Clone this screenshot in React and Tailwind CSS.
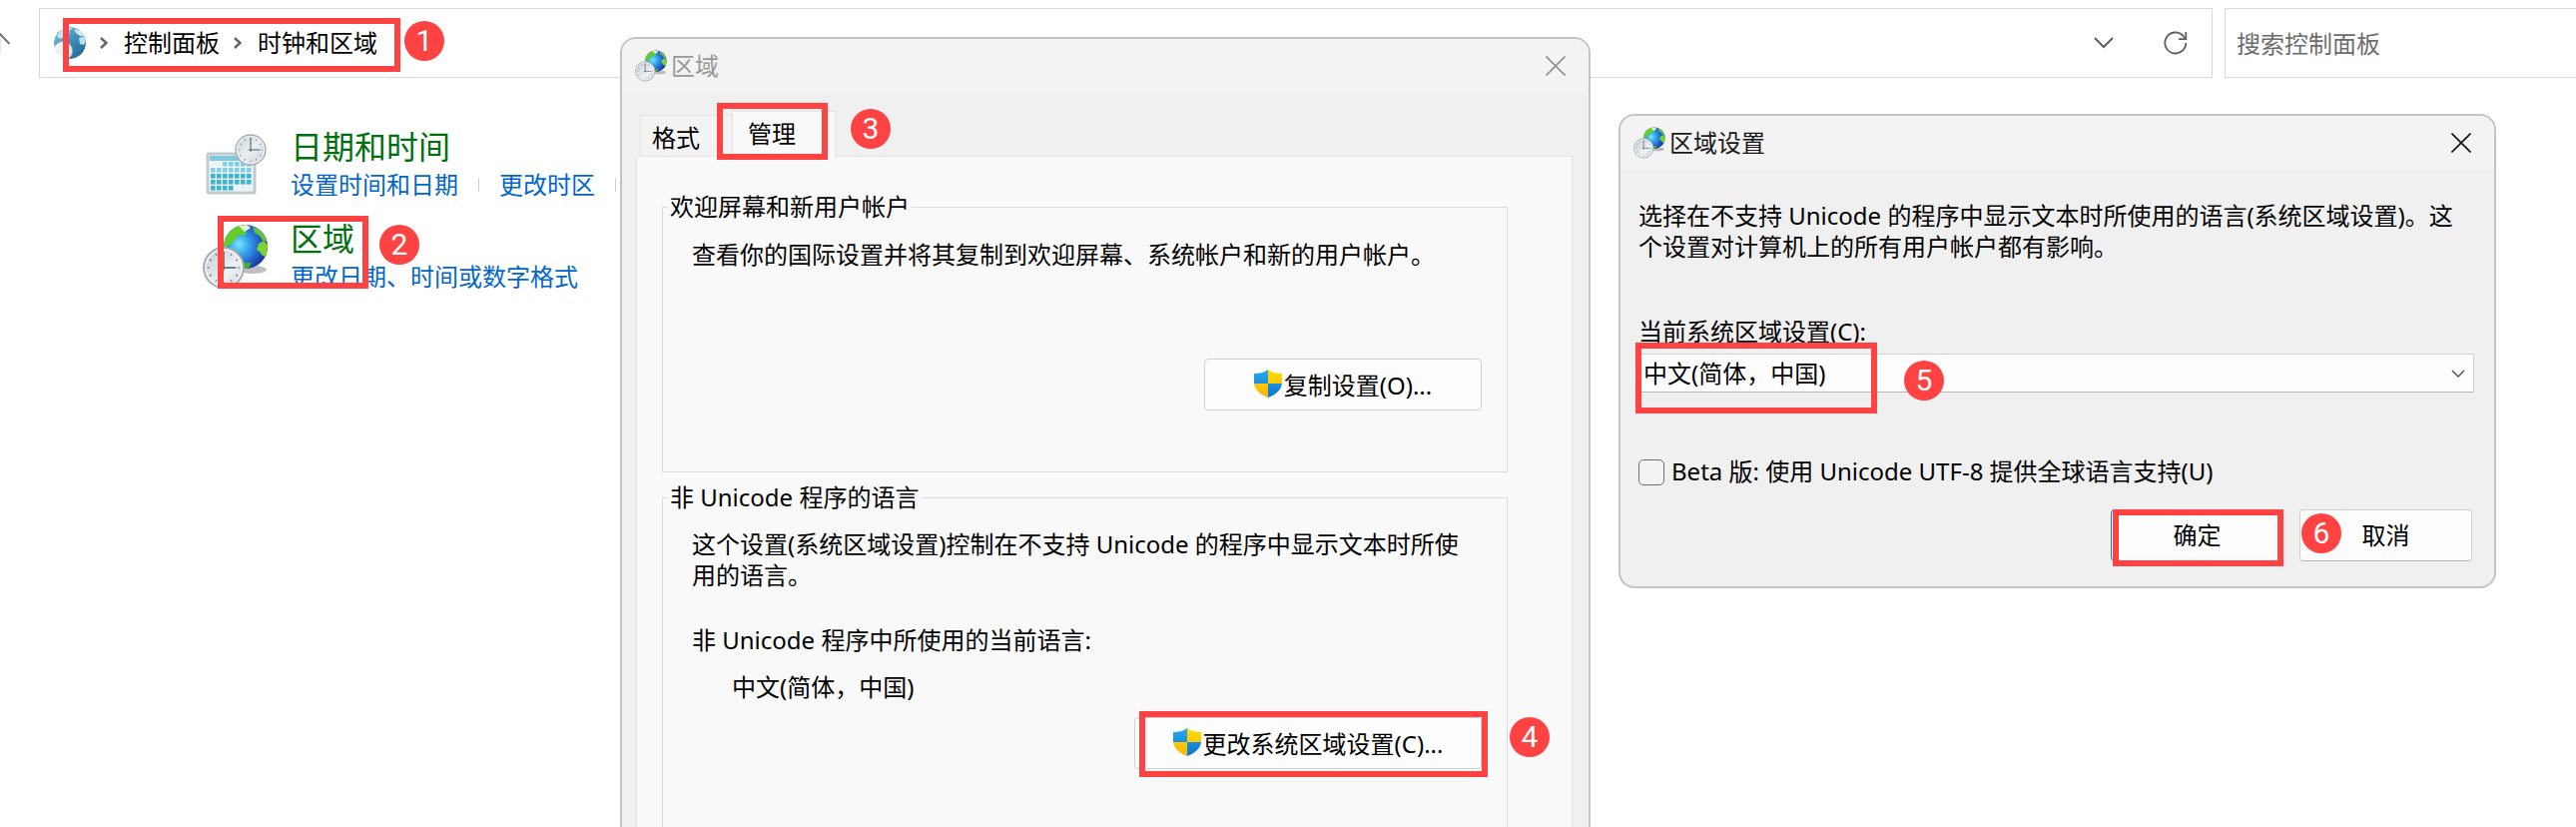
import React, { useId } from "react";

function ClockFace({ cx, cy, r, fill }) {
  const ticks = [0, 30, 60, 90, 120, 150, 180, 210, 240, 270, 300, 330];
  return (
    <g>
      <circle cx={cx} cy={cy} r={r} fill={fill} stroke="#a3acb2" strokeWidth={r * 0.09} />
      <circle cx={cx} cy={cy} r={r * 0.9} fill="none" stroke="#eef1f3" strokeWidth={r * 0.07} />
      {ticks.map((t) => (
        <line
          key={t}
          x1={cx}
          y1={cy - r * 0.82}
          x2={cx}
          y2={cy - r * 0.7}
          stroke="#6b7883"
          strokeWidth={r * 0.05}
          transform={`rotate(${t} ${cx} ${cy})`}
        />
      ))}
      <path
        d={`M${cx} ${cy - r * 0.8}V${cy + r * 0.12}M${cx - r * 0.14} ${cy}H${cx + r * 0.62}`}
        stroke="#4e5d69"
        strokeWidth={r * 0.07}
        fill="none"
      />
    </g>
  );
}

function RegionIcon({ className }) {
  const id = useId();
  return (
    <svg className={className} viewBox="0 0 66 66" aria-hidden="true">
      <defs>
        <radialGradient id={`${id}o`} cx="0.35" cy="0.45" r="0.65">
          <stop offset="0" stopColor="#7be6fb" />
          <stop offset="0.35" stopColor="#35a5ea" />
          <stop offset="0.75" stopColor="#2159c8" />
          <stop offset="1" stopColor="#1b2f96" />
        </radialGradient>
        <linearGradient id={`${id}c`} x1="0" y1="0" x2="1" y2="1">
          <stop offset="0" stopColor="#c2cdd5" />
          <stop offset="0.45" stopColor="#dfe5e9" />
          <stop offset="0.6" stopColor="#f1f3f5" />
          <stop offset="1" stopColor="#c6cfd5" />
        </linearGradient>
        <clipPath id={`${id}p`}>
          <circle cx="43" cy="23" r="22" />
        </clipPath>
      </defs>
      <ellipse cx="50" cy="46" rx="14" ry="4" fill="#8a8a8a" opacity="0.55" />
      <circle cx="43" cy="23" r="22" fill={`url(#${id}o)`} />
      <g clipPath={`url(#${id}p)`}>
        <path d="M19 28 C20 12 28 3 38 1 L45 4 L42 7 L44 10 L39 12 L36 11 L33 16 L30 17 L29 21 L25 21 L23 26 Z" fill="#66cc2c" />
        <path d="M36 2 L44 1 L48 4 L42 8 L39 5 Z" fill="#eaf7cc" />
        <path d="M50 3 L57 6 L63 13 L64 18 L60 17 L57 12 L52 9 Z" fill="#62c53a" />
        <path d="M56 20 L61 17 L66 22 L65 30 L62 33 L59 31 L57 28 L54 26 Z" fill="#7ad32f" />
        <path d="M40 39 L49 39 L46 44 L41 47 L38 43 Z" fill="#42b32b" />
      </g>
      <ClockFace cx={21} cy={44} r={20} fill={`url(#${id}c)`} />
    </svg>
  );
}

function AddressGlobeIcon() {
  const id = useId();
  return (
    <svg className="size-8 shrink-0" viewBox="0 0 32 32" aria-hidden="true">
      <defs>
        <linearGradient id={`${id}o`} x1="0" y1="0" x2="1" y2="1">
          <stop offset="0" stopColor="#8cc9e6" />
          <stop offset="0.5" stopColor="#3b8fb8" />
          <stop offset="1" stopColor="#1b5f8c" />
        </linearGradient>
        <clipPath id={`${id}p`}>
          <circle cx="16" cy="16" r="16" />
        </clipPath>
      </defs>
      <g clipPath={`url(#${id}p)`}>
        <circle cx="16" cy="16" r="16" fill={`url(#${id}o)`} />
        <path d="M3 9 L7 3 L13 0 L19 1 L15 4 L16 6 L12 7 L10 10 L6 12 Z" fill="#c5e5f2" />
        <path d="M20 2 L27 4 L30 9 L26 9 L22 6 Z" fill="#cfe9f3" />
        <path d="M25 11 L30 9 L32 14 L30 18 L26 17 Z" fill="#b9dfee" />
        <circle cx="9" cy="24" r="9.500" fill="#f1f3f4" stroke="#9fa9b0" strokeWidth="1" />
      </g>
    </svg>
  );
}

function DateTimeIcon({ className }) {
  const id = useId();
  const cells = [];
  for (let r = 0; r < 5; r++) {
    for (let c = 0; c < 7; c++) {
      const blank = (r === 0 && c < 2) || (r === 4 && c > 3);
      cells.push(
        <rect
          key={`${r}-${c}`}
          x={8 + c * 6}
          y={30 + r * 6}
          width="4.600"
          height="4.600"
          fill={blank ? "#e3f3f9" : r < 2 ? "#7fd0e6" : "#38b4d6"}
        />
      );
    }
  }
  return (
    <svg className={className} viewBox="0 0 66 66" aria-hidden="true">
      <defs>
        <linearGradient id={`${id}c`} x1="0" y1="0" x2="1" y2="1">
          <stop offset="0" stopColor="#c6d3da" />
          <stop offset="0.5" stopColor="#e8edf0" />
          <stop offset="1" stopColor="#c9d2d8" />
        </linearGradient>
      </defs>
      <rect x="5" y="22" width="47" height="39" rx="1" fill="#f3f9fc" stroke="#c3cacd" strokeWidth="3" />
      <rect x="7" y="24" width="43" height="5" fill="#7ec8e2" />
      {cells}
      <ClockFace cx={48} cy={18} r={15} fill={`url(#${id}c)`} />
    </svg>
  );
}

function ShieldIcon() {
  const id = useId();
  return (
    <svg className="size-7 shrink-0" viewBox="0 0 28 28" aria-hidden="true">
      <defs>
        <clipPath id={`${id}s`}>
          <path d="M14 0 C10 3 5 4 0 4 V13 C0 20 6 25 14 28 C22 25 28 20 28 13 V4 C23 4 18 3 14 0 Z" />
        </clipPath>
        <linearGradient id={`${id}b`} x1="0" y1="0" x2="0" y2="1">
          <stop offset="0" stopColor="#2ba9ea" />
          <stop offset="1" stopColor="#0b74d1" />
        </linearGradient>
        <linearGradient id={`${id}y`} x1="0" y1="0" x2="0" y2="1">
          <stop offset="0" stopColor="#ffdc00" />
          <stop offset="1" stopColor="#fdb50a" />
        </linearGradient>
      </defs>
      <g clipPath={`url(#${id}s)`}>
        <path d="M0 0H14V28H28V14H0Z" fill={`url(#${id}b)`} />
        <path d="M14 0H28V14H0V28H14Z" fill={`url(#${id}y)`} />
      </g>
    </svg>
  );
}

function CloseButton({ className }) {
  return (
    <button type="button" aria-label="关闭" className={className}>
      <svg className="size-5" viewBox="0 0 20 20" fill="none" stroke="currentColor" strokeWidth="1.6">
        <path d="M0.5 0.5L19.5 19.5M19.5 0.5L0.5 19.5" />
      </svg>
    </button>
  );
}

function Crumb() {
  return (
    <svg className="h-3 w-2 shrink-0 text-[#666]" viewBox="0 0 8 12" fill="none" stroke="currentColor" strokeWidth="2.4">
      <path d="M1 1L6.4 6L1 11" />
    </svg>
  );
}

function TitleBar({ title, muted }) {
  return (
    <div className="flex h-14 items-center border-b border-[#ededed] bg-[#f3f3f3] pr-[23px] pb-0.5 pl-[13px]">
      <RegionIcon className="size-8" />
      <h2 className={muted ? "ml-1 flex-1 leading-8 text-[#999]" : "ml-1 flex-1 leading-8 text-[#1a1a1a]"}>{title}</h2>
      <CloseButton className={muted ? "text-[#8f8f8f]" : "text-[#111]"} />
    </div>
  );
}

function PushButton({ className, children }) {
  return (
    <button
      type="button"
      className={`flex h-[52px] items-center justify-center rounded-[4px] border bg-[#fdfdfd] ${className}`}
    >
      {children}
    </button>
  );
}

function CategoryItem({ icon, title, links, trailing }) {
  return (
    <li className="flex gap-[22px]">
      <span className="pt-[5px]">{icon}</span>
      <div>
        <h2 className="text-[32px] leading-10">
          <a href="#" className="text-[#006f0f]">{title}</a>
        </h2>
        <div className="flex items-center leading-9 text-[#0066cc]">
          {links.map((l, i) => (
            <React.Fragment key={l}>
              {i > 0 && <span className="mx-5 h-3.5 w-px bg-[#d0d0d0]" />}
              <a href="#">{l}</a>
            </React.Fragment>
          ))}
          {trailing && <span className="ml-5 h-3.5 w-px bg-[#d0d0d0]" />}
        </div>
      </div>
    </li>
  );
}

function Mark({ className }) {
  return <div className={`pointer-events-none absolute z-20 border-[6px] border-[#ff4343] ${className}`} />;
}

function Step({ n, className }) {
  return (
    <span
      className={`absolute z-20 flex size-10 items-center justify-center rounded-full bg-[#ff4343] font-[Roboto,sans-serif] text-[30px] leading-none text-white ${className}`}
    >
      {n}
    </span>
  );
}

export default function App() {
  return (
    <div className="relative h-screen overflow-hidden bg-white font-['Noto_Sans','Noto_Sans_CJK_SC',sans-serif] text-[24px] text-black" lang="zh-CN">
      <header className="flex pt-2">
        <button type="button" aria-label="向上" className="flex h-[70px] w-[39px] shrink-0 items-center">
          <svg className="h-6 w-3" viewBox="0 0 12 24" fill="none">
            <path d="M0 3V23" stroke="#e6e6e6" strokeWidth="2" />
            <path d="M-1 2L9.500 13" stroke="#777" strokeWidth="2" />
          </svg>
        </button>
        <nav aria-label="地址" className="flex h-[70px] flex-1 items-center border border-[#d9d9d9] pr-6 pl-[14px] leading-8">
          <AddressGlobeIcon />
          <span className="mr-4 ml-[14px] flex"><Crumb /></span>
          <a href="#">控制面板</a>
          <span className="mr-4 ml-[14px] flex"><Crumb /></span>
          <a href="#">时钟和区域</a>
          <span className="flex-1" />
          <button type="button" aria-label="以前的位置" className="mr-[50px] text-[#5f5f5f]">
            <svg className="h-3 w-5" viewBox="0 0 20 12" fill="none" stroke="currentColor" strokeWidth="2">
              <path d="M1 1L10 10L19 1" />
            </svg>
          </button>
          <button type="button" aria-label="刷新" className="text-[#5f5f5f]">
            <svg className="size-6" viewBox="0 0 24 24" fill="none" stroke="currentColor" strokeWidth="1.8">
              <path d="M22.300 12A10.500 10.500 0 1 1 19.500 4.800L22 8" />
              <path d="M22.300 1V8.200H15" />
            </svg>
          </button>
        </nav>
        <input
          type="search"
          aria-label="搜索控制面板"
          placeholder="搜索控制面板"
          className="ml-3 h-[70px] w-[352px] border border-r-0 border-[#d9d9d9] bg-white pl-[11px] leading-8 placeholder:text-[#6d6d6d]"
        />
      </header>

      <main className="pt-[49px] pl-[203px]">
        <ul className="flex flex-col gap-4">
          <CategoryItem
            icon={<DateTimeIcon className="size-[66px]" />}
            title="日期和时间"
            links={["设置时间和日期", "更改时区"]}
            trailing
          />
          <CategoryItem icon={<RegionIcon className="size-[66px]" />} title="区域" links={["更改日期、时间或数字格式"]} />
        </ul>
      </main>

      <section
        role="dialog"
        aria-label="区域"
        className="absolute top-[37px] left-[621px] w-[972px] overflow-hidden rounded-2xl border-2 border-[#c4c4c4] bg-[#f0f0f0] pb-24"
      >
        <TitleBar title="区域" muted />
        <div role="tablist" className="flex items-end pt-4 pl-[18px] leading-8">
          <button type="button" role="tab" aria-selected="false" className="h-[41px] w-[92px] border border-r-0 border-b-0 border-[#e5e5e5] bg-[#f3f3f3] pt-1 pl-[11px] text-left">
            格式
          </button>
          <button type="button" role="tab" aria-selected="true" className="relative z-10 -mb-px h-[46px] w-[104px] border border-b-0 border-[#e5e5e5] bg-[#f9f9f9] pb-0.5 pl-[15px] text-left">
            管理
          </button>
        </div>
        <div role="tabpanel" className="mr-4 ml-[14px] flex flex-col gap-[9px] border border-[#e5e5e5] bg-[#f9f9f9] pt-[34px] pr-16 pb-12 pl-[25px]">
          <fieldset className="border border-[#dcdcdc] pr-[25px] pb-[61px] pl-[29px]">
            <legend className="-ml-6 px-0.5 leading-8">欢迎屏幕和新用户帐户</legend>
            <p className="pt-4 leading-[31px]">查看你的国际设置并将其复制到欢迎屏幕、系统帐户和新的用户帐户。</p>
            <div className="mt-[89px] flex justify-end">
              <PushButton className="w-[278px] border-[#d0d0d0] pb-0.5">
                <ShieldIcon />
                <span className="ml-0.5 pt-1 leading-8">复制设置(O)...</span>
              </PushButton>
            </div>
          </fieldset>
          <fieldset className="border border-[#dcdcdc] pr-[25px] pb-[61px] pl-[29px]">
            <legend className="-ml-6 px-0.5 leading-8">非 Unicode 程序的语言</legend>
            <p className="pt-[15px] leading-[31px]">这个设置(系统区域设置)控制在不支持 Unicode 的程序中显示文本时所使用的语言。</p>
            <p className="mt-[34px] leading-[31px]">非 Unicode 程序中所使用的当前语言:</p>
            <p className="mt-4 pl-10 leading-[31px]">中文(简体，中国)</p>
            <div className="mt-[15px] flex justify-end">
              <PushButton className="w-[348px] border-[#d0d0d0] pb-0.5">
                <ShieldIcon />
                <span className="ml-0.5 pt-1 leading-8">更改系统区域设置(C)...</span>
              </PushButton>
            </div>
          </fieldset>
        </div>
      </section>

      <section
        role="dialog"
        aria-label="区域设置"
        className="absolute top-[114px] left-[1621px] w-[879px] overflow-hidden rounded-2xl border-2 border-[#c4c4c4] bg-[#f0f0f0]"
      >
        <TitleBar title="区域设置" />
        <form className="flex flex-col pt-7 pr-5 pb-[25px] pl-[18px]">
          <p className="leading-[31px]">选择在不支持 Unicode 的程序中显示文本时所使用的语言(系统区域设置)。这个设置对计算机上的所有用户帐户都有影响。</p>
          <label htmlFor="locale" className="mt-[54px] leading-8">当前系统区域设置(C):</label>
          <div className="relative mt-1.5">
            <select
              id="locale"
              className="h-[39px] w-full appearance-none border border-[#d0d0d0] border-b-[#b8b8b8] bg-[#fdfdfd] pl-1 leading-8"
            >
              <option>中文(简体，中国)</option>
            </select>
            <svg className="pointer-events-none absolute top-4 right-[9px] h-2 w-[14px] text-[#555]" viewBox="0 0 14 8" fill="none" stroke="currentColor" strokeWidth="1.5">
              <path d="M1 1L7 7L13 1" />
            </svg>
          </div>
          <div className="mt-16 flex h-8 items-center gap-[7px] leading-8">
            <input id="utf8" type="checkbox" className="size-[26px] appearance-none rounded-[5px] border border-[#6f6f6f] bg-[#f3f3f3]" />
            <label htmlFor="utf8" className="pb-0.5">Beta 版: 使用 Unicode UTF-8 提供全球语言支持(U)</label>
          </div>
          <div className="mt-[21px] flex justify-end gap-4 pr-0.5">
            <PushButton className="w-[173px] border-[#0078d4]">确定</PushButton>
            <PushButton className="w-[173px] border-[#d0d0d0] border-b-[#b8b8b8]">取消</PushButton>
          </div>
        </form>
      </section>

      <Mark className="top-[18px] left-[63px] h-[54px] w-[338px]" />
      <Step n="1" className="top-[21px] left-[405px]" />
      <Mark className="top-[216px] left-[218px] h-[73px] w-[151px]" />
      <Step n="2" className="top-[225px] left-[380px]" />
      <Mark className="top-[103px] left-[718px] h-[57px] w-[111px]" />
      <Step n="3" className="top-[109px] left-[852px]" />
      <Mark className="top-[712px] left-[1141px] h-[66px] w-[349px]" />
      <Step n="4" className="top-[718px] left-[1512px]" />
      <Mark className="top-[343px] left-[1638px] h-[71px] w-[242px]" />
      <Step n="5" className="top-[361px] left-[1907px]" />
      <Mark className="top-[510px] left-[2116px] h-[57px] w-[171px]" />
      <Step n="6" className="top-[514px] left-[2305px]" />
    </div>
  );
}
